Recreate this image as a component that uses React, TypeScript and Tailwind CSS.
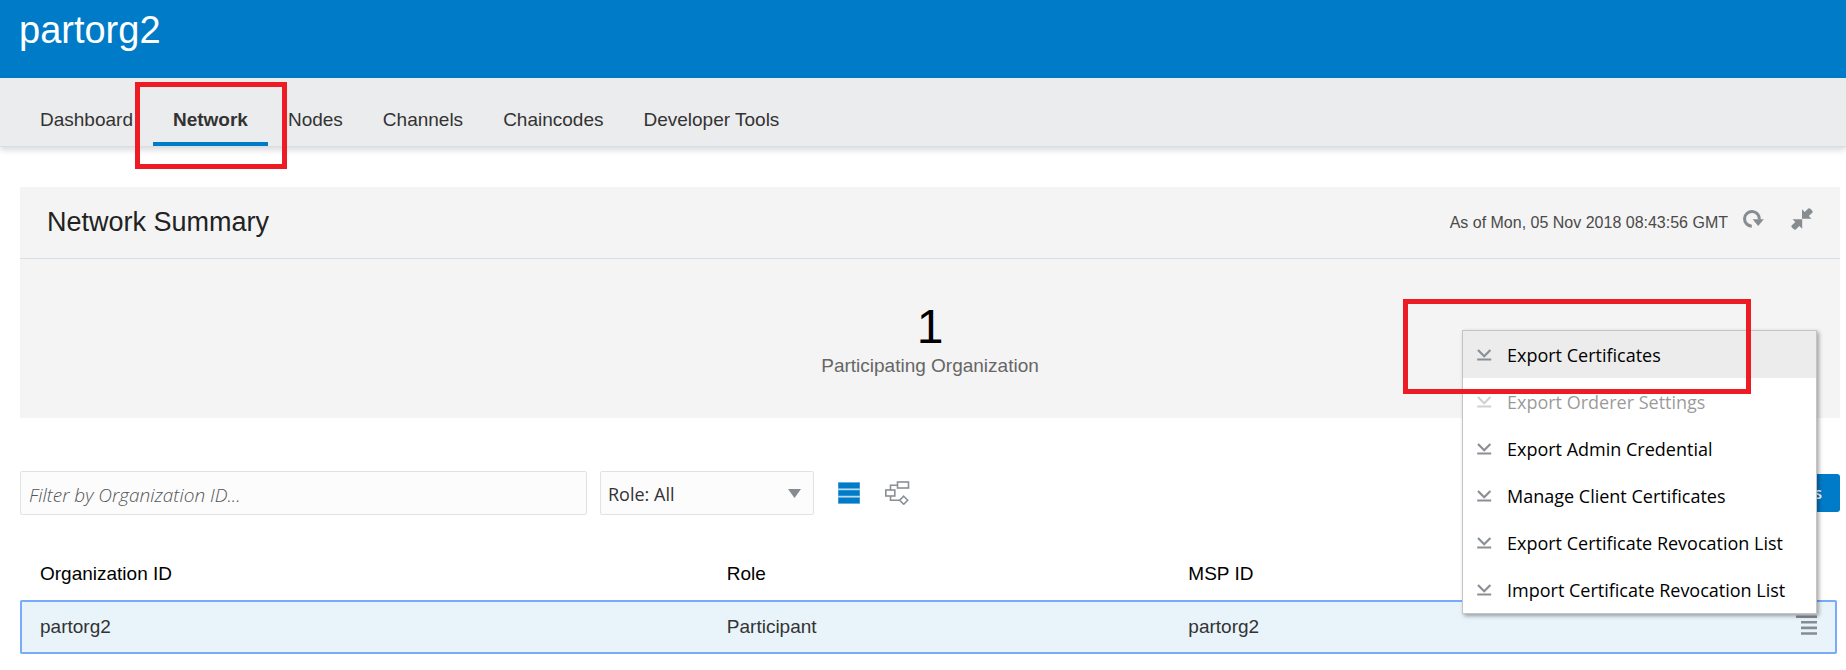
import React from "react";

const tabs = ["Dashboard", "Network", "Nodes", "Channels", "Chaincodes", "Developer Tools"];

const menuItems = [
  { label: "Export Certificates", active: true },
  { label: "Export Orderer Settings", disabled: true },
  { label: "Export Admin Credential" },
  { label: "Manage Client Certificates" },
  { label: "Export Certificate Revocation List" },
  { label: "Import Certificate Revocation List" },
];

function RefreshIcon() {
  return (
    <svg width="22" height="20" viewBox="0 0 22 20" fill="none">
      <path d="M9.8 17.2A7.4 7.4 0 1 1 17.3 10.5" stroke="#868c90" strokeWidth="3" />
      <path d="M10.6 10.3h11.2l-5.6 6.8z" fill="#868c90" />
    </svg>
  );
}

function CollapseIcon() {
  return (
    <svg width="22" height="22" viewBox="0 0 22 22" fill="#868c90">
      <path d="M11 1.2L13.8 4 17.2.6Q18.3-.2 19.3.8L21.3 2.8Q22 3.8 21.3 4.7L17.8 8.1 20.6 10.7H11z" />
      <path d="M1.5 11.3H11.2V20.7L8.3 18 4.8 21.4Q3.8 22.2 2.8 21.3L.7 19.2Q0 18.3.8 17.3L4.3 13.9z" />
    </svg>
  );
}

function ExportIcon() {
  return (
    <svg width="15" height="12" viewBox="0 0 15 12" fill="none" className="shrink-0">
      <path d="M1 1L7.2 7.2 13.4 1" stroke="#8a8f94" strokeWidth="2.2" />
      <path d="M0.200 10.500h14" stroke="#8a8f94" strokeWidth="2" />
    </svg>
  );
}

function ListIcon() {
  return (
    <svg width="22" height="22" viewBox="0 0 22 22">
      {[0, 7.5, 15].map((y) => (
        <g key={y} fill="#007bc8">
          <rect x="0" y={y} width="22" height="7" opacity="0.55" />
          <rect x="0.5" y={y + 0.9} width="21" height="5.2" />
        </g>
      ))}
    </svg>
  );
}

function TopologyIcon() {
  return (
    <svg width="25" height="24" viewBox="0 0 25 24" fill="none" stroke="#8a8f94" strokeWidth="1.6">
      <rect x="12.5" y="1" width="11" height="6" />
      <rect x="0.8" y="9" width="9" height="6" />
      <path d="M5.500 9V4.300H12.500M5.500 15v4.200h9.500" />
      <path d="M18.700 15.200l4 4-4 4-4-4z" />
    </svg>
  );
}

function RowMenuIcon() {
  return (
    <svg width="21" height="20" viewBox="0 0 21 20" fill="#868c94">
      <path d="M0 .5h21v2.500H0zM5 6h16v2.600H5zM5 11.600h16v2.600H5zM5 17.200h16v2.600H5z" />
    </svg>
  );
}

function ActionMenu() {
  return (
    <ul className="absolute right-5 bottom-10 w-[355px] border border-[#c4c4c4] bg-white font-['Open_Sans','Noto_Sans',sans-serif] text-[18px] leading-6 text-black shadow-[2px_2px_4px_rgba(0,0,0,0.35)]">
      {menuItems.map((item) => (
        <li key={item.label} className="relative">
          <button
            type="button"
            disabled={item.disabled}
            className={
              item.active
                ? "flex h-[47px] w-full items-center gap-[15px] bg-[#ececec] pl-3.5 text-left"
                : "flex h-[47px] w-full items-center gap-[15px] pl-3.5 text-left disabled:opacity-40"
            }
          >
            <ExportIcon />
            {item.label}
          </button>
          {item.active && (
            <div className="pointer-events-none absolute -top-8 -left-[60px] z-10 h-[95px] w-[348px] border-5 border-[#ed1c24]" />
          )}
        </li>
      ))}
    </ul>
  );
}

export default function App() {
  return (
    <div className="min-h-screen bg-white font-['Liberation_Sans',Arial,sans-serif] text-[19px] leading-6 text-[#333]">
      <header className="bg-[#007bc8] px-[19px] pt-1.5 pb-6">
        <h1 className="text-[38px] leading-[48px] text-white">partorg2</h1>
      </header>

      <nav className="flex border-b border-[#d6dfe6] bg-[#ebeced] px-5 shadow-[0_3px_6px_rgba(0,0,0,0.15)]">
        {tabs.map((tab) =>
          tab === "Network" ? (
            <div key={tab} className="relative">
              <a href="#network" aria-current="page" className="block px-5 pt-[30px] font-bold">
                {tab}
              </a>
              <div className="mt-2.5 h-1 bg-[#007bc8]" />
              <div className="pointer-events-none absolute top-1 -right-[19px] -left-[18px] h-[87px] border-5 border-[#ed1c24]" />
            </div>
          ) : (
            <a key={tab} href="#" className="block px-5 pt-[30px]">
              {tab}
            </a>
          ),
        )}
      </nav>

      <main className="mt-10 pr-1.5 pl-5">
        <section className="bg-[#f4f4f4]">
          <div className="flex h-[72px] items-center justify-between border-b border-[#d6dfe6] pr-[27px] pl-[27px]">
            <h2 className="pb-0.5 text-[27px] leading-9 text-[#222]">Network Summary</h2>
            <div className="flex items-center">
              <span className="text-base text-[#4a4a4a]">As of Mon, 05 Nov 2018 08:43:56 GMT</span>
              <button type="button" aria-label="Refresh" className="ml-3.5 pb-2">
                <RefreshIcon />
              </button>
              <button type="button" aria-label="Collapse" className="ml-[27px] pb-2">
                <CollapseIcon />
              </button>
            </div>
          </div>
          <div className="flex flex-col items-center gap-[3px] pt-11 pb-10">
            <div className="text-5xl leading-none text-black">1</div>
            <div className="text-[#666]">Participating Organization</div>
          </div>
        </section>

        <div className="mt-[53px] flex items-center font-['Open_Sans','Noto_Sans',sans-serif]">
          <input
            type="text"
            aria-label="Filter by Organization ID"
            placeholder="Filter by Organization ID..."
            className="h-11 w-[567px] rounded-xs border border-[#dfe3e6] bg-[#fcfcfc] px-2 pt-1 text-[19px] font-light placeholder:text-[#555] placeholder:italic"
          />
          <div className="relative ml-[13px]">
            <select
              aria-label="Role"
              className="h-11 w-[214px] appearance-none rounded-xs border border-[#dfe3e6] bg-[#fcfcfc] pt-0.5 pl-[7px] text-[18px] text-[#333]"
            >
              <option>Role: All</option>
            </select>
            <svg
              width="13"
              height="9"
              viewBox="0 0 13 9"
              className="pointer-events-none absolute top-[18px] right-[13px]"
            >
              <path d="M0 0h13L6.500 9z" fill="#868b90" />
            </svg>
          </div>
          <button type="button" aria-label="List view" className="ml-6">
            <ListIcon />
          </button>
          <button type="button" aria-label="Topology view" className="ml-[25px]">
            <TopologyIcon />
          </button>
          <button
            type="button"
            className="ml-auto h-[38px] w-40 rounded-[3px] bg-[#007bc8] pr-[18px] text-right text-base font-semibold text-white"
          >
            s
          </button>
        </div>

        <div className="relative mt-[29px] mr-[3px]">
          <table className="w-full table-fixed border-separate border-spacing-0 text-left">
            <thead>
              <tr className="text-black">
                <th className="w-[37.8%] px-5 pt-[18px] pb-3.5 font-normal">Organization ID</th>
                <th className="w-[25.4%] px-5 pt-[18px] pb-3.5 font-normal">Role</th>
                <th className="px-5 pt-[18px] pb-3.5 font-normal">MSP ID</th>
                <td className="w-20" />
              </tr>
            </thead>
            <tbody>
              <tr className="h-[54px] rounded-xs bg-[#e8f3fa] outline-2 -outline-offset-2 outline-[#78abf9]">
                <td className="px-5">partorg2</td>
                <td className="px-5">Participant</td>
                <td className="px-5">partorg2</td>
                <td className="pr-5">
                  <button type="button" aria-label="Row actions" className="ml-auto block pb-1">
                    <RowMenuIcon />
                  </button>
                </td>
              </tr>
            </tbody>
          </table>
          <ActionMenu />
        </div>
      </main>
    </div>
  );
}
